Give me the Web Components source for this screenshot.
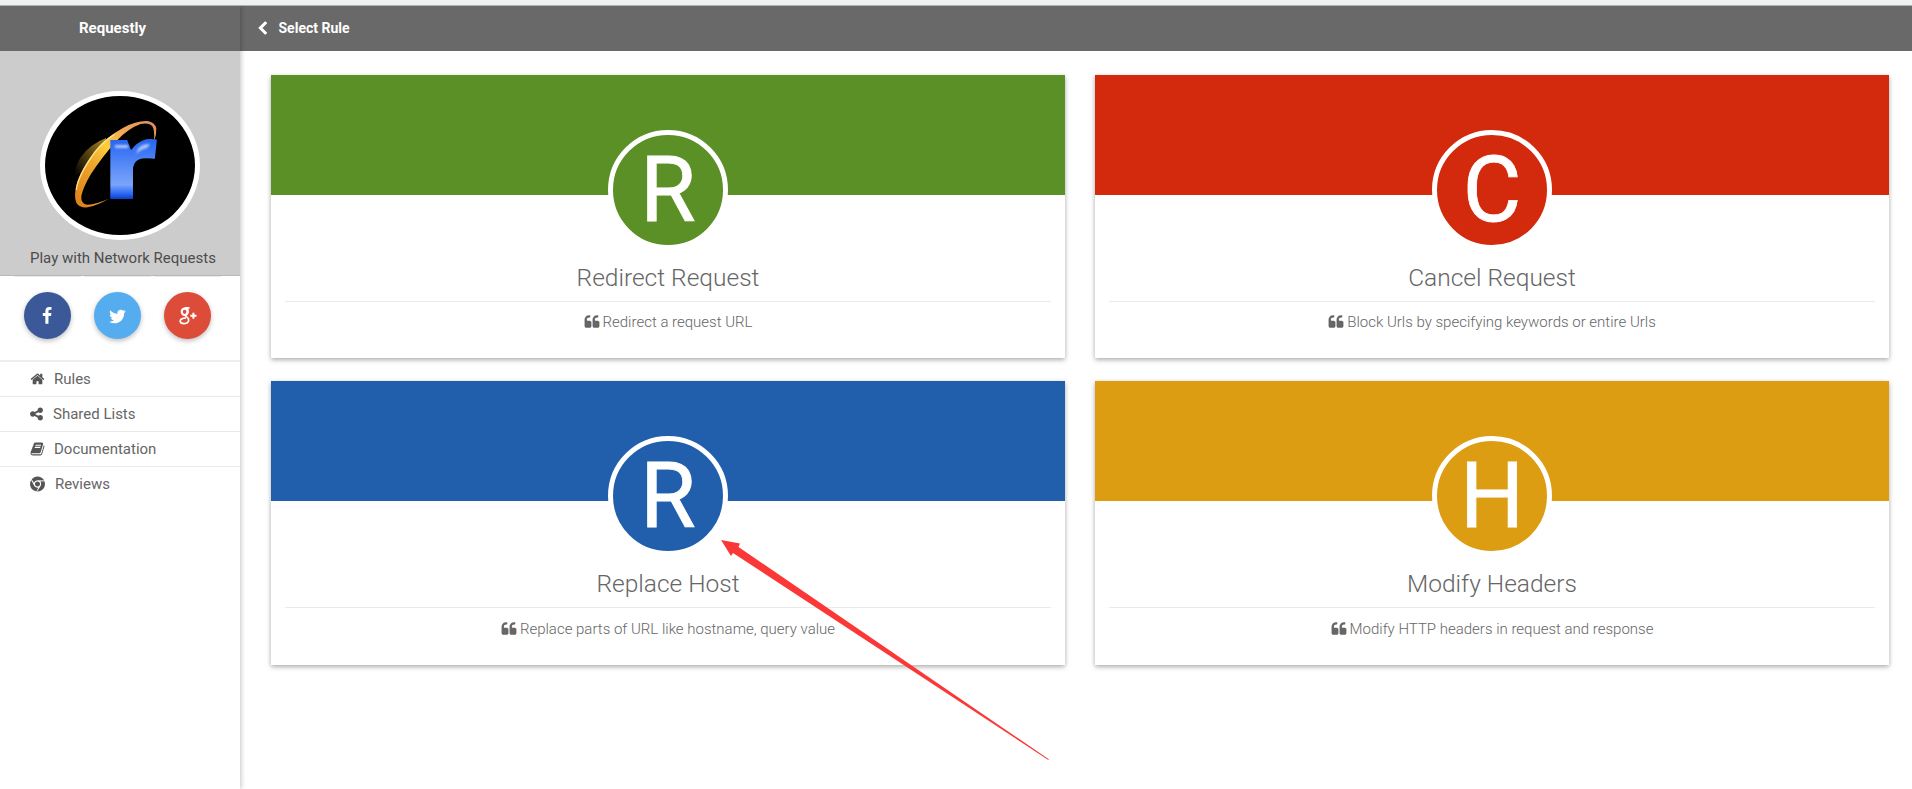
<!DOCTYPE html>
<html lang="en">
<head>
<meta charset="utf-8">
<title>Requestly</title>
<style>
html,body{margin:0;height:100%;overflow:hidden;background:#fff}
body{font-family:Roboto,"Liberation Sans",sans-serif;color:#666}
</style>
</head>
<body>
<rq-app></rq-app>
<script>
const ICONS = {
  home:"M1472 992v480q0 26-19 45t-45 19h-384v-384h-256v384h-384q-26 0-45-19t-19-45v-480q0-1 .5-3t.5-3l575-474 575 474q1 2 1 6zm223-69l-62 74q-8 9-21 11h-3q-13 0-21-7l-692-577-692 577q-12 8-24 7-13-2-21-11l-62-74q-8-10-7-23.5t11-21.5l719-599q32-26 76-26t76 26l244 204v-195q0-14 9-23t23-9h192q14 0 23 9t9 23v408l219 182q10 8 11 21.5t-7 23.5z",
  share:"M1344 1024q133 0 226.5 93.5t93.5 226.5-93.5 226.5-226.5 93.5-226.5-93.5-93.5-226.5q0-12 2-34l-360-180q-92 86-218 86-133 0-226.5-93.5t-93.5-226.5 93.5-226.5 226.5-93.5q126 0 218 86l360-180q-2-22-2-34 0-133 93.5-226.5t226.5-93.5 226.5 93.5 93.5 226.5-93.5 226.5-226.5 93.5q-126 0-218-86l-360 180q2 22 2 34t-2 34l360 180q92-86 218-86z",
  book:"M1703 478q40 57 18 129l-275 906q-19 64-76.5 107.5t-122.5 43.5h-923q-77 0-148.5-53.5t-99.5-131.5q-24-67-2-127 0-4 3-27t4-37q1-8-3-21.5t-3-19.5q2-11 8-21t16.5-23.5 16.5-23.5q23-38 45-91.5t30-91.5q3-10 .5-30t-.5-28q3-11 17-28t17-23q21-36 42-92t25-90q1-9-2.5-32t.5-28q4-13 22-30.5t22-22.5q19-26 42.5-84.5t27.5-96.5q1-8-3-25.5t-2-26.5q2-8 9-18t18-23 17-21q8-12 16.5-30.5t15-35 16-36 19.5-32 26.5-23.5 36-11.5 47.5 5.5l-1 3q38-9 51-9h761q74 0 114 56t18 130l-274 906q-36 119-71.5 153.5t-128.5 34.5h-869q-27 0-38 15-11 16-1 43 24 70 144 70h923q29 0 56-15.5t35-41.5l300-987q7-22 5-57 38 15 59 43zm-1064 2q-4 13 2 22.5t20 9.5h608q13 0 25.5-9.5t16.5-22.5l21-64q4-13-2-22.5t-20-9.5h-608q-13 0-25.5 9.5t-16.5 22.5zm-83 256q-4 13 2 22.5t20 9.5h608q13 0 25.5-9.5t16.5-22.5l21-64q4-13-2-22.5t-20-9.5h-608q-13 0-25.5 9.5t-16.5 22.5z",
  chrome:"M893 0q240-2 451 120 232 134 352 372l-742-39q-160-9-294 74.5t-185 229.5l-276-424q128-159 311-245.5t383-87.5zm-747 405l337 663q72 143 211 217t293 45l-230 451q-212-33-385-157.5t-272.5-316-99.5-411.5q0-267 146-491zm1580 169q58 150 59.5 310.5t-48.5 306-153 272-246 209.5q-230 133-498 119l405-623q88-131 82.5-290.5t-106.5-277.5zm-830 20q125 0 213.5 88.5t88.5 213.5-88.5 213.5-213.5 88.5-213.5-88.5-88.5-213.5 88.5-213.5 213.5-88.5z",
  quote:"M832 960v384q0 80-56 136t-136 56h-384q-80 0-136-56t-56-136v-704q0-104 40.5-198.5t109.5-163.5 163.5-109.5 198.5-40.5h64q26 0 45 19t19 45v128q0 26-19 45t-45 19h-64q-106 0-181 75t-75 181v32q0 40 28 68t68 28h224q80 0 136 56t56 136zm896 0v384q0 80-56 136t-136 56h-384q-80 0-136-56t-56-136v-704q0-104 40.5-198.5t109.5-163.5 163.5-109.5 198.5-40.5h64q26 0 45 19t19 45v128q0 26-19 45t-45 19h-64q-106 0-181 75t-75 181v32q0 40 28 68t68 28h224q80 0 136 56t56 136z",
  twitter:"M1684 408q-67 98-162 167 1 14 1 42 0 130-38 259.5t-115.5 248.5-184.5 210.5-258 146-323 54.5q-271 0-496-145 35 4 78 4 225 0 401-138-105-2-188-64.5t-114-159.5q33 5 61 5 43 0 85-11-112-23-185.5-111.5t-73.5-205.5v-4q68 38 146 41-66-44-105-115t-39-154q0-88 44-163 121 149 294.5 238.5t371.5 99.5q-8-38-8-74 0-134 94.5-228.5t228.5-94.5q140 0 236 102 109-21 205-78-37 115-142 178 93-10 186-50z",
  facebook:"M1343 12v264h-157q-86 0-116 36t-30 108v189h293l-39 296h-254v759h-306v-759h-255v-296h255v-218q0-186 104-288.5t277-102.5q147 0 228 12z",
  back:"M1427 301l-531 531 531 531q19 19 19 45t-19 45l-166 166q-19 19-45 19t-45-19l-742-742q-19-19-19-45t19-45l742-742q19-19 45-19t45 19l166 166q19 19 19 45t-19 45z"
};
const define = (name, html) => {
  const t = document.createElement('template');
  t.innerHTML = html;
  customElements.define(name, class extends HTMLElement {
    constructor(){ super(); this.attachShadow({mode:'open'}).append(t.content.cloneNode(true)); }
  });
};

customElements.define('rq-icon', class extends HTMLElement {
  connectedCallback(){
    if (this.shadowRoot) return;
    const name = this.getAttribute('name');
    const body = name === 'gplus'
      ? `<g fill="none" stroke="currentColor" stroke-width="170"><ellipse cx="560" cy="480" rx="290" ry="320" stroke-width="210"/><path d="M560 90H1050M800 150Q930 330 900 500Q880 620 740 740Q600 850 700 940L830 1040Q1000 1180 960 1360Q900 1650 520 1650Q140 1650 120 1400Q120 1130 700 1090"/><path d="M1130 870H1740M1435 565V1175" stroke-width="200"/></g>`
      : `<path fill="currentColor" d="${ICONS[name]}"/>`;
    this.attachShadow({mode:'open'}).innerHTML =
      `<style>:host{display:block;width:16px;height:16px;flex:none}svg{display:block;width:100%;height:100%;overflow:visible}</style><svg viewBox="0 0 1792 1792">${body}</svg>`;
  }
});

define('rq-logo', `
<style>
:host{display:block;box-sizing:border-box;width:160px;height:149px;border:5px solid #fff;border-radius:50%;background:#000}
svg{display:block;overflow:visible}
text{font:800 106px "Open Sans",sans-serif}
</style>
<svg width="150" height="139" viewBox="45 96 150 139">
  <defs>
    <linearGradient id="ring" x1="0" y1="1" x2="1" y2="0"><stop offset="0" stop-color="#dd7f18"/><stop offset=".35" stop-color="#eda52c"/><stop offset=".55" stop-color="#ffce3c"/><stop offset=".75" stop-color="#f0a45a"/><stop offset="1" stop-color="#e08a58"/></linearGradient>
    <linearGradient id="glow" x1="1" y1="0" x2="0" y2="1"><stop offset="0" stop-color="#a88420"/><stop offset="1" stop-color="#000"/></linearGradient>
    <linearGradient id="blue" gradientUnits="userSpaceOnUse" x1="0" y1="-58" x2="0" y2="0"><stop offset="0" stop-color="#2a68f0"/><stop offset=".2" stop-color="#3f78f5"/><stop offset=".75" stop-color="#7ba4fb"/><stop offset=".9" stop-color="#2f6cf5"/><stop offset="1" stop-color="#0a3dc8"/></linearGradient>
    <filter id="soft"><feGaussianBlur stdDeviation="1.2"/></filter>
  </defs>
  <g transform="translate(20 70) scale(.3333)">
    <path fill="url(#glow)" d="M258 204Q210 222 182 262Q164 290 165 318L182 308Q215 255 258 210Z"/>
    <path fill="url(#ring)" d="M266 386Q235 405 203 412Q178 414 169 398Q160 375 172 335Q188 290 225 244Q260 200 310 173Q350 151 383 153Q405 157 409 175Q410 195 402 214Q405 178 396 167Q385 157 362 162Q325 175 290 212Q245 262 213 312Q190 350 184 378Q182 402 202 404Q230 403 266 386Z"/>
    <path fill="none" stroke="#fff0a0" stroke-width="4" opacity=".8" d="M169 360Q172 320 225 246Q250 214 282 194"/>
  </g>
  <g transform="translate(102.6 199) scale(1.12 1)"><text fill="url(#blue)">r</text></g>
  <path fill="#fff" opacity=".6" filter="url(#soft)" d="M115 145H128V148H115ZM138 149Q142 143.500 150 144L147 148Q141 149 136 154Z"/>
</svg>`);

define('rq-social', `
<style>
:host{display:flex;width:47px;height:47px;border-radius:50%;align-items:center;justify-content:center;color:#fff;background:var(--tone);box-shadow:0 2px 5px rgba(0,0,0,.26)}
</style><slot></slot>`);

define('rq-nav-item', `
<style>
:host{display:flex;box-sizing:border-box;height:35px;align-items:center;padding-left:30px;font-size:15px;line-height:20px;color:#666;border-bottom:1px solid #eaeaea}
:host(:last-of-type){border-bottom:0;height:34px}
::slotted(rq-icon){color:#555;margin-right:var(--gap,10px)}
</style><slot></slot>`);

define('rq-sidebar', `
<style>
:host{display:flex;flex-direction:column;width:240px;flex:none;background:#fff;box-shadow:1px 0 5px rgba(0,0,0,.24);position:relative;z-index:2}
header{background:#696969;color:#fff;font:700 15px/34px Roboto,sans-serif;height:45px;box-sizing:border-box;padding:5px 15px 0 0;text-align:center}
.profile{box-sizing:border-box;height:225px;background:#ccc;border-bottom:1px solid #b9b9b9;padding:40px 0 0 40px}
.tag{margin:8px 0 0 -10px;font-size:15px;line-height:20px;color:#4c4c4c;white-space:nowrap}
.social{box-sizing:border-box;height:84px;display:flex;gap:3px;padding:0 0 0 14px}
.social div{width:67px;height:82px;box-sizing:border-box;border-top:1px solid #eaeaea;padding:15px 10px 0}
nav{border-top:2px solid #eee;padding-bottom:2px}
</style>
<header><span>Requestly</span></header>
<div class="profile"><rq-logo></rq-logo><div class="tag">Play with Network Requests</div></div>
<div class="social">
  <div><rq-social style="--tone:#3b5998"><rq-icon name="facebook" style="width:18px;height:18px;margin-right:1px"></rq-icon></rq-social></div>
  <div><rq-social style="--tone:#55acee"><rq-icon name="twitter" style="width:19px;height:19px;margin-top:2px"></rq-icon></rq-social></div>
  <div><rq-social style="--tone:#dd4b39"><rq-icon name="gplus" style="width:18px;height:18px"></rq-icon></rq-social></div>
</div>
<nav>
  <rq-nav-item style="--gap:9px"><rq-icon name="home" style="width:15px"></rq-icon>Rules</rq-nav-item>
  <rq-nav-item style="--gap:9px"><rq-icon name="share" style="width:15px;margin-left:-1px"></rq-icon>Shared Lists</rq-nav-item>
  <rq-nav-item style="--gap:9px"><rq-icon name="book" style="width:15px"></rq-icon>Documentation</rq-nav-item>
  <rq-nav-item style="--gap:10px"><rq-icon name="chrome" style="width:15px"></rq-icon>Reviews</rq-nav-item>
</nav>`);

define('rq-rule-card', `
<style>
:host{display:block;height:var(--h,284px);background:#fff;box-shadow:0 2px 5px rgba(0,0,0,.26),0 1px 4px rgba(0,0,0,.1);text-align:center}
.banner{height:120px;background:var(--tone)}
.badge{box-sizing:border-box;width:120px;height:120px;margin:-65px auto 0;border:5px solid #fff;border-radius:50%;background:var(--tone);color:#fff;font:400 90px/112px Roboto,sans-serif;-webkit-text-stroke:.8px #fff}
h2{margin:12px 14px 0;height:39px;border-bottom:1px solid #eaeaea;font:300 24.5px/32px Roboto,sans-serif;color:#666}
p{margin:var(--gap,11px) 0 0;display:flex;justify-content:center;align-items:center;font:300 15px/20px Roboto,sans-serif;color:#666}
rq-icon{width:16px;height:16px;margin-right:3px;color:#666}
</style>
<div class="banner"></div>
<div class="badge"><slot name="letter"></slot></div>
<h2><slot name="title"></slot></h2>
<p><rq-icon name="quote"></rq-icon><slot></slot></p>`);

define('rq-main', `
<style>
:host{display:flex;flex-direction:column;flex:1;min-width:0}
header{height:45px;background:#696969;color:#fff;display:flex;align-items:center;padding:0 0 1px 15px;box-sizing:border-box;font:700 14px/20px Roboto,sans-serif}
header rq-icon{width:15px;height:15px;margin-right:8.5px}
.grid{display:grid;grid-template-columns:794px 794px;column-gap:30px;row-gap:23px;align-items:start;padding:24px 23px 0 31px}
</style>
<header><rq-icon name="back"></rq-icon><span>Select Rule</span></header>
<div class="grid"><slot></slot></div>`);

define('rq-pointer', `
<style>:host{display:block;position:absolute;left:0;top:0;z-index:5;pointer-events:none}svg{display:block}</style>
<svg width="1100" height="789"><path fill="#fb3737" d="M721 540L740 543.5L738.5 547L1048.800 759.200L1048.300 760L733 553L731 556Z"/></svg>`);

define('rq-app', `
<style>
:host{display:flex;flex-direction:column;height:100vh;width:100%;overflow:hidden;position:relative}
.strip{height:5px;background:#f1f3f2;border-bottom:1px solid #adb3af;flex:none;position:relative;z-index:3}
.row{display:flex;flex:1}
</style>
<div class="strip"></div>
<div class="row">
<rq-sidebar></rq-sidebar>
<rq-main>
  <rq-rule-card style="--tone:#5b9027;--h:283px;--gap:10px"><span slot="letter">R</span><span slot="title">Redirect Request</span><span>Redirect a request URL</span></rq-rule-card>
  <rq-rule-card style="--tone:#d32a0e;--h:283px;--gap:10px"><span slot="letter">C</span><span slot="title">Cancel Request</span><span>Block Urls by specifying keywords or entire Urls</span></rq-rule-card>
  <rq-rule-card style="--tone:#215fad"><span slot="letter">R</span><span slot="title">Replace Host</span><span>Replace parts of URL like hostname, query value</span></rq-rule-card>
  <rq-rule-card style="--tone:#dc9d13"><span slot="letter">H</span><span slot="title">Modify Headers</span><span>Modify HTTP headers in request and response</span></rq-rule-card>
</rq-main>
</div>
<rq-pointer></rq-pointer>`);
</script>
</body>
</html>
